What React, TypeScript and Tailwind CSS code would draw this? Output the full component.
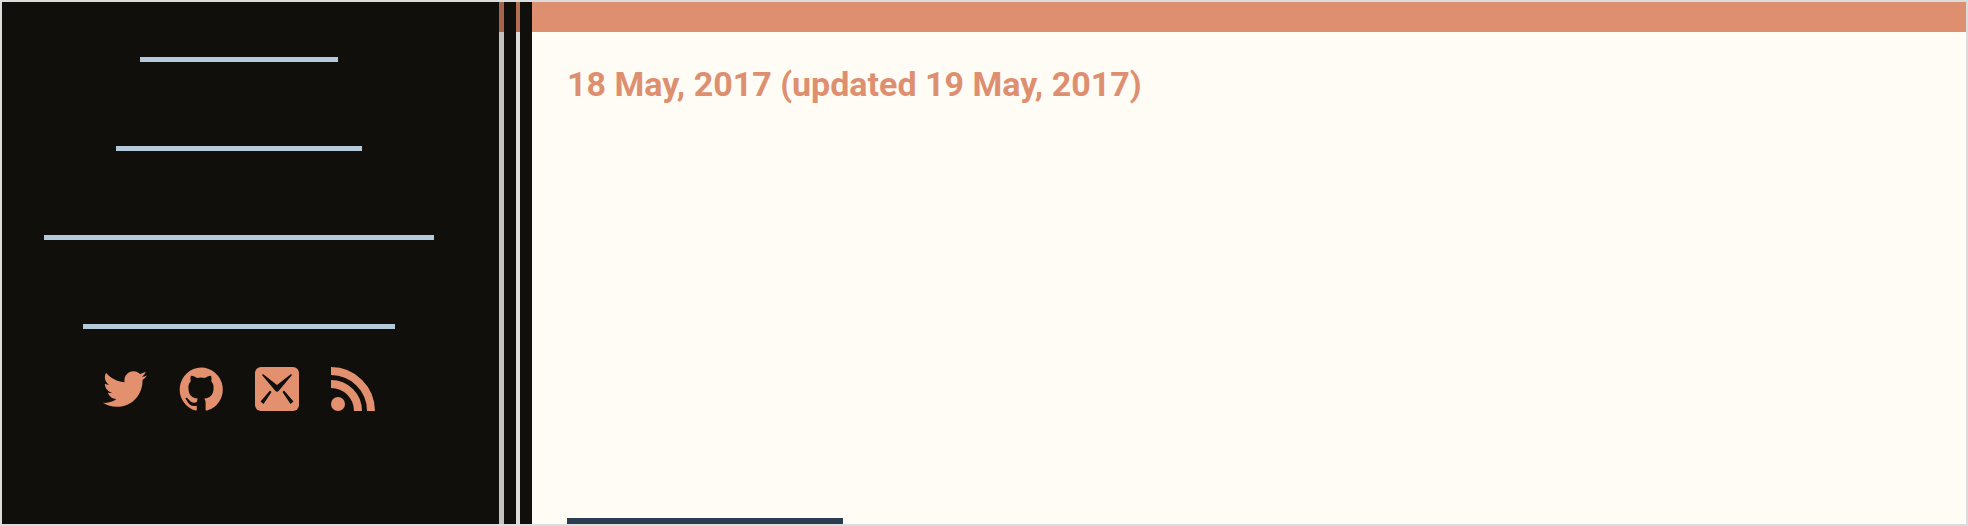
import type { ReactNode } from "react";
import { FaTwitter } from "react-icons/fa";

const links = [
  { id: "home", label: "Home", width: "w-[198px]" },
  { id: "about", label: "About", width: "w-[246px]" },
  { id: "projects", label: "Projects", width: "w-[390px]" },
  { id: "archive", label: "Archive", width: "w-[312px]" },
];

function GithubIcon() {
  return (
    <svg viewBox="0 0 44 44" className="size-full" aria-hidden="true">
      <path
        fill="currentColor"
        d="M22 0.5 A22 22 0 0 0 16.5 43.6 Q17.8 43.8 17.8 42.5 V38.8 C12.5 39.8 10 37.5 8.5 34.8 C7.8 33.4 7 32.6 6.6 31.6 C6.4 30.8 7.6 30.6 8.4 31.2 C10 32.5 10.8 33.8 12 34.8 C13.8 36 16.3 35.8 17.9 35 C18.1 33.4 18.4 32.3 18.8 31.6 C13.4 30.8 9.4 28.6 9.4 20.4 C9.4 17.8 10.3 15.8 11.8 14.2 C11.4 12.9 11.2 10.8 12 8.8 C14.2 8.7 16.4 10 18 11 Q22 10 26 11 C27.6 10 29.8 8.7 32 8.8 C32.8 10.8 32.6 12.9 32.2 14.2 C33.7 15.8 34.6 17.8 34.6 20.4 C34.6 28.6 30.6 30.8 25.2 31.6 C26 32.6 26.6 34 26.6 36 V42.5 Q26.6 43.8 28 43.6 A22 22 0 0 0 22 0.5 Z"
      />
    </svg>
  );
}

function MailIcon() {
  return (
    <svg viewBox="0 0 44 44" className="size-full" aria-hidden="true">
      <rect width="44" height="44" rx="6" fill="currentColor" />
      <path
        d="M7 8 L8 7 L22 18 L36 7 L37 8 L24 23.5 Q22 26 20 23.5 Z M15 23.5 L16.5 25 L8.5 37 L5.5 34.5 Z M29 23.5 L27.5 25 L35.5 37 L38.5 34.5 Z"
        fill="#100f0b"
      />
    </svg>
  );
}

function FeedIcon() {
  return (
    <svg viewBox="0 0 44 44" className="size-full" fill="none" stroke="currentColor" strokeWidth="8" aria-hidden="true">
      <circle cx="7" cy="37" r="7" fill="currentColor" stroke="none" />
      <path d="M0 17 A27 27 0 0 1 27 44" />
      <path d="M0 4 A40 40 0 0 1 40 44" />
    </svg>
  );
}

function SocialLink({ label, children }: { label: string; children: ReactNode }) {
  return (
    <a href="#" aria-label={label} className="size-11 text-[#e3906f]">
      {children}
    </a>
  );
}

export default function App() {
  return (
    <div className="flex min-h-screen border-2 border-[#dcdcdc] bg-[#fffcf5] font-[Roboto,sans-serif]">
      <aside className="flex w-[530px] shrink-0 bg-[#100f0b]">
        <div className="flex grow flex-col items-center pr-6">
          <nav className="flex flex-col items-center gap-[84px] pt-[55px]">
            {links.map((link) => (
              <a key={link.id} href="#" aria-label={link.label} className={`h-[5px] bg-[#b4c9d9] ${link.width}`} />
            ))}
          </nav>
          <div className="mt-[38px] flex gap-8">
            <SocialLink label="Twitter"><FaTwitter className="size-full" /></SocialLink>
            <SocialLink label="GitHub"><GithubIcon /></SocialLink>
            <SocialLink label="Email"><MailIcon /></SocialLink>
            <SocialLink label="RSS feed"><FeedIcon /></SocialLink>
          </div>
        </div>
        <div className="flex w-[33px] shrink-0 gap-3">
          <div className="w-[5px] bg-[#c4c2bf]"><div className="h-[30px] bg-[#a5654c]" /></div>
          <div className="w-1 bg-[#dedcd8]"><div className="h-[30px] bg-[#b56e54]" /></div>
        </div>
      </aside>
      <main className="flex min-w-0 grow flex-col">
        <div className="h-[30px] bg-[#de8f70]" />
        <article className="flex grow flex-col justify-between pl-[35px]">
          <time dateTime="2017-05-18" className="pt-[30px] text-[34px] leading-[44px] font-bold text-[#de8f70]">
            18 May, 2017 (updated 19 May, 2017)
          </time>
          <div className="h-[6px] w-[276px] bg-[#2b3d51]" />
        </article>
      </main>
    </div>
  );
}
